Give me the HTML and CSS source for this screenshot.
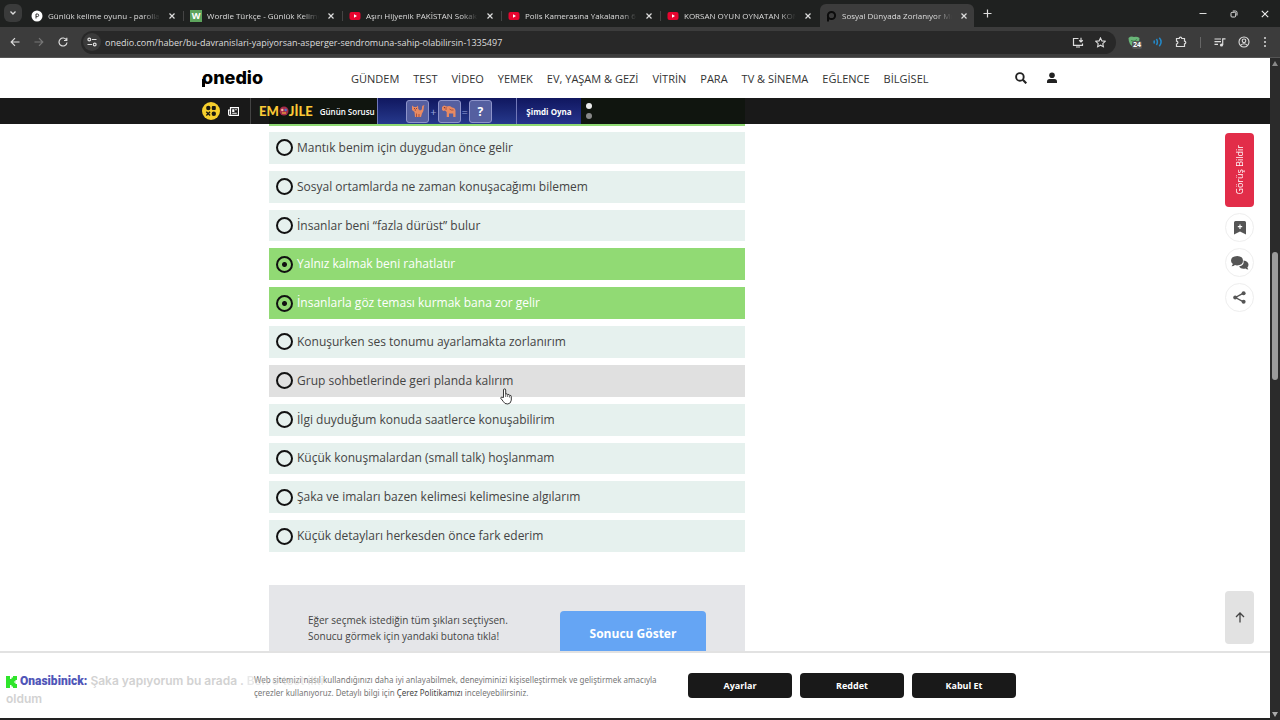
FILE: index.html
```html
<!DOCTYPE html>
<html lang="tr">
<head>
    <meta charset="UTF-8">
    <meta name="viewport" content="width=device-width, initial-scale=1.0">
    <title>Sosyal Dünyada Zorlanıyor Musun?</title>
    <link rel="stylesheet" href="styles.css">
</head>
<body>
    <!-- Sekmeler -->
    <div class="tab-strip">
        <button class="tab-search" aria-label="Sekmelerde ara"><svg width="8" height="8" viewBox="0 0 8 8"><path d="M1.5 2.5 4 5l2.5-2.5" fill="none" stroke="#ddd" stroke-width="1.3"/></svg></button>
        <div class="tab">
            <svg class="favicon" viewBox="0 0 12 12"><circle cx="6" cy="6" r="5.5" fill="#fff"/><path d="M5 8.5V4h1.4a1.3 1.3 0 0 1 0 2.6H5" fill="none" stroke="#333"/></svg>
            <span class="tab-title">Günlük kelime oyunu - parolla</span>
            <button class="tab-close" aria-label="Kapat"><svg width="6" height="6" viewBox="0 0 6 6"><path d="m.5.5 5 5m0-5-5 5" stroke="#ddd" stroke-width="1.2"/></svg></button>
        </div>
        <div class="tab">
            <span class="favicon wordle">W</span>
            <span class="tab-title">Wordle Türkçe - Günlük Kelime</span>
            <button class="tab-close" aria-label="Kapat"><svg width="6" height="6" viewBox="0 0 6 6"><path d="m.5.5 5 5m0-5-5 5" stroke="#ddd" stroke-width="1.2"/></svg></button>
        </div>
        <div class="tab">
            <svg class="favicon" viewBox="0 0 12 12"><rect x="0.5" y="2" width="11" height="8" rx="2" fill="#e8052f"/><path d="M5 4.2 8 6 5 7.8z" fill="#fff"/></svg>
            <span class="tab-title">Aşırı Hijyenik PAKİSTAN Sokak Y</span>
            <button class="tab-close" aria-label="Kapat"><svg width="6" height="6" viewBox="0 0 6 6"><path d="m.5.5 5 5m0-5-5 5" stroke="#ddd" stroke-width="1.2"/></svg></button>
        </div>
        <div class="tab">
            <svg class="favicon" viewBox="0 0 12 12"><rect x="0.5" y="2" width="11" height="8" rx="2" fill="#e8052f"/><path d="M5 4.2 8 6 5 7.8z" fill="#fff"/></svg>
            <span class="tab-title">Polis Kamerasına Yakalanan 6 D</span>
            <button class="tab-close" aria-label="Kapat"><svg width="6" height="6" viewBox="0 0 6 6"><path d="m.5.5 5 5m0-5-5 5" stroke="#ddd" stroke-width="1.2"/></svg></button>
        </div>
        <div class="tab last">
            <svg class="favicon" viewBox="0 0 12 12"><rect x="0.5" y="2" width="11" height="8" rx="2" fill="#e8052f"/><path d="M5 4.2 8 6 5 7.8z" fill="#fff"/></svg>
            <span class="tab-title">KORSAN OYUN OYNATAN KON</span>
            <button class="tab-close" aria-label="Kapat"><svg width="6" height="6" viewBox="0 0 6 6"><path d="m.5.5 5 5m0-5-5 5" stroke="#ddd" stroke-width="1.2"/></svg></button>
        </div>
        <div class="tab active">
            <svg class="favicon" viewBox="0 0 12 12"><circle cx="6.5" cy="5.5" r="3.6" fill="none" stroke="#0c0c0c" stroke-width="2"/><path d="M3 6v5.5" stroke="#0c0c0c" stroke-width="2"/></svg>
            <span class="tab-title">Sosyal Dünyada Zorlanıyor Mus</span>
            <button class="tab-close" aria-label="Kapat"><svg width="6" height="6" viewBox="0 0 6 6"><path d="m.5.5 5 5m0-5-5 5" stroke="#ddd" stroke-width="1.2"/></svg></button>
        </div>
        <button class="new-tab" aria-label="Yeni sekme"><svg width="9" height="9" viewBox="0 0 9 9"><path d="M4.5 .5v8M.5 4.5h8" stroke="#ddd" stroke-width="1.2"/></svg></button>
        <div class="window-buttons">
            <button aria-label="Küçült"><svg width="8" height="8" viewBox="0 0 8 8"><path d="M.5 3.5h7" stroke="#ddd"/></svg></button>
            <button aria-label="Önceki boyut"><svg width="8" height="8" viewBox="0 0 8 8"><rect x="1" y="2.3" width="4.7" height="4.7" rx="1" fill="none" stroke="#ddd"/><path d="M2.8 1h2.7A1.5 1.5 0 0 1 7 2.5v3" fill="none" stroke="#ddd"/></svg></button>
            <button aria-label="Kapat"><svg width="8" height="8" viewBox="0 0 8 8"><path d="m.8.8 6.4 6.4M7.2.8.8 7.2" stroke="#eee" stroke-width="1.1"/></svg></button>
        </div>
    </div>

    <!-- Adres çubuğu -->
    <div class="toolbar">
        <button aria-label="Geri"><svg width="10" height="10" viewBox="0 0 10 10"><path d="M9.5 5H1.2M5 1.2 1.2 5 5 8.8" fill="none" stroke="#ddd" stroke-width="1.2"/></svg></button>
        <button aria-label="İleri"><svg width="10" height="10" viewBox="0 0 10 10"><path d="M.5 5h8.3M5 1.2 8.8 5 5 8.8" fill="none" stroke="#777" stroke-width="1.2"/></svg></button>
        <button aria-label="Yenile"><svg width="10" height="10" viewBox="0 0 10 10"><path d="M8.5 3A4 4 0 1 0 9 5.5M8.8.7v2.8H6" fill="none" stroke="#ddd" stroke-width="1.2"/></svg></button>
        <div class="address">
            <span class="site-info"><svg width="10" height="10" viewBox="0 0 10 10" fill="none" stroke="#ddd" stroke-width="1.2"><circle cx="2.3" cy="2.5" r="1.4"/><path d="M5 2.5h4.5M.5 7.5H5"/><circle cx="7.7" cy="7.5" r="1.4"/></svg></span>
            <input type="text" aria-label="Adres" value="onedio.com/haber/bu-davranislari-yapiyorsan-asperger-sendromuna-sahip-olabilirsin-1335497">
            <button aria-label="Yükle"><svg width="12" height="11" viewBox="0 0 12 11"><path d="M6.5 1.5h-5v6.8h9V6.5M4 10h4M9 .8v4M7.2 3.3 9 5l1.8-1.7" fill="none" stroke="#ddd" stroke-width="1.2"/></svg></button>
            <button aria-label="Yer işareti"><svg width="11" height="11" viewBox="0 0 11 11"><path d="m5.5.9 1.4 3 3.3.4-2.4 2.3.6 3.2-2.9-1.6-2.9 1.6.6-3.2L.8 4.3l3.3-.4z" fill="none" stroke="#ddd" stroke-width="1.1"/></svg></button>
        </div>
        <div class="extensions">
            <button class="shield" aria-label="Engelleyici"><svg width="12" height="12" viewBox="0 0 12 12"><path d="M.5 2Q3-.3 6 1q3-1 5.500 1Q11.500 9 6 11 .5 9 .5 2" fill="#69b578"/><path d="M3 4.500q3 2 6-1" stroke="#3d7f4b" fill="none"/></svg><span class="count">24</span></button>
            <button aria-label="Ses"><svg width="10" height="10" viewBox="0 0 10 10" fill="none" stroke="#2489c9" stroke-width="1.5"><path d="M.8 3.500q1 1.500 0 3M3.400 2q2 3 0 6M6.300.8q3.600 4.200 0 8.400"/></svg></button>
            <button aria-label="Uzantılar"><svg width="12" height="12" viewBox="0 0 12 12"><path d="M1.500 2.500h2.700a1.300 1.300 0 0 1 2.600 0h2.700v2.700a1.300 1.300 0 0 1 0 2.600v2.700h-8V8a1.300 1.300 0 0 0 0-2.800z" fill="none" stroke="#ddd" stroke-width="1.200"/></svg></button>
            <span class="divider"></span>
            <button aria-label="Medya"><svg width="12" height="11" viewBox="0 0 12 11"><path d="M.5 2h6.500M.5 4.700h6.500M.5 7.400h3.500M8.700 8V1.800h2.800" fill="none" stroke="#ddd" stroke-width="1.200"/><circle cx="7.500" cy="8" r="1.600" fill="#ddd"/></svg></button>
            <button aria-label="Profil"><svg width="12" height="12" viewBox="0 0 12 12" fill="none" stroke="#ddd" stroke-width="1.100"><circle cx="6" cy="6" r="5"/><circle cx="6" cy="4.800" r="1.800"/><path d="M2.500 9.300q3.500-3 7 0"/></svg></button>
            <button aria-label="Menü"><svg width="4" height="12" viewBox="0 0 4 12" fill="#ddd"><circle cx="2" cy="2" r="1"/><circle cx="2" cy="6" r="1"/><circle cx="2" cy="10" r="1"/></svg></button>
        </div>
    </div>

    <div class="viewport">
        <div class="site">
            <header class="site-header">
                <div class="wrap header-row">
                    <a href="#" class="logo">onedio</a>
                    <nav class="menu">
                        <a href="#">GÜNDEM</a>
                        <a href="#">TEST</a>
                        <a href="#">VİDEO</a>
                        <a href="#">YEMEK</a>
                        <a href="#">EV, YAŞAM &amp; GEZİ</a>
                        <a href="#">VİTRİN</a>
                        <a href="#">PARA</a>
                        <a href="#">TV &amp; SİNEMA</a>
                        <a href="#">EĞLENCE</a>
                        <a href="#">BİLGİSEL</a>
                    </nav>
                    <div class="header-icons">
                        <button aria-label="Ara"><svg width="12" height="12" viewBox="0 0 12 12"><circle cx="4.900" cy="4.900" r="3.800" fill="none" stroke="#222" stroke-width="1.900"/><path d="m7.800 7.800 3.500 3.500" stroke="#222" stroke-width="2.200"/></svg></button>
                        <button aria-label="Üye girişi"><svg width="10" height="12" viewBox="0 0 10 12" fill="#222"><circle cx="5" cy="3.300" r="2.800"/><path d="M0 11V9.500Q0 7 2.500 7h5Q10 7 10 9.500V11z"/></svg></button>
                    </div>
                </div>
            </header>

            <!-- Oyun şeridi -->
            <div class="game-strip">
                <div class="wrap strip-row">
                    <div class="strip-icons">
                        <a href="#" aria-label="Oyunlar"><svg width="18" height="18" viewBox="0 0 18 18"><circle cx="9" cy="9" r="9" fill="#f6cf2d"/><g fill="#1b1a12"><circle cx="6.300" cy="6" r="2.200"/><rect x="9.800" y="4" width="4" height="4" rx="1"/><circle cx="11.800" cy="11.700" r="2.200"/></g><path d="m4.300 9.800 3.800 3.800m0-3.800-3.800 3.800" stroke="#1b1a12" stroke-width="1.400"/></svg></a>
                        <a href="#" aria-label="Haberler"><svg width="11" height="9" viewBox="0 0 11 9"><path d="M2.500.7h8v7.600H1.600A1 1 0 0 1 .6 7.300V3h1.900zM2.500 3v4.500" fill="none" stroke="#fff" stroke-width="1.200"/><path d="M4.200 2.300h2.200v2.600H4.200zM7.200 2.300h1.600v1H7.200zM4.200 5.800h4.600v1H4.200z" fill="#fff"/></svg></a>
                    </div>
                    <a href="#" class="emojile"><span class="emojile-logo">EM<svg width="10" height="10" viewBox="0 0 10 10"><circle cx="5" cy="5" r="4.500" fill="#a52d4b"/><circle cx="3.300" cy="4" r="1.200" fill="#f4b6a0"/><circle cx="6.700" cy="4" r="1.200" fill="#4778cf"/><path d="M3 7h4" stroke="#fbc936"/></svg>JİLE</span>Günün Sorusu</a>
                    <a href="#" class="riddle" aria-label="Günün sorusu">
                        <span class="tile"><svg width="16" height="16" viewBox="0 0 16 16"><path d="M2 2.500 4 4h2.500L8 2.500 8.300 6 10 7.500q2.500-.5 2-3.500 0-2 2.500-1.700-.8.700-.7 2.500 0 4-1.800 5.700L11 14H5L4.500 9 2 7z" fill="#e98a62"/><path d="M4 5.500h.8M6 5.500h.8M4.800 7h1" stroke="#702c2c"/><path d="M6.500 14v-3.500M9 14v-3" stroke="#ad523f"/></svg></span>
                        <span class="sign">+</span>
                        <span class="tile"><svg width="16" height="16" viewBox="0 0 16 16"><path d="M1 7V4l2-1.500 3 1L8 3q2 0 3 1.500 3 0 3.500 3V14h-2.300v-3.500H8V14H5.700V9L4 7.500 2.500 8z" fill="#e98a62"/><path d="M5 4v3M8.500 6q1.500 1.500 4 1" stroke="#ad523f" fill="none"/><circle cx="3.400" cy="4.700" r=".6" fill="#702c2c"/></svg></span>
                        <span class="sign">=</span>
                        <span class="tile">?</span>
                    </a>
                    <a href="#" class="play">Şimdi Oyna</a>
                    <div class="strip-rest"><span class="dot on"></span><span class="dot"></span></div>
                </div>
            </div>

            <div class="page-body">
                <main class="article">
                    <form>
                        <div class="cut-option"></div>
                        <div class="options">
                            <label class="option"><input type="checkbox">Mantık benim için duygudan önce gelir</label>
                            <label class="option"><input type="checkbox">Sosyal ortamlarda ne zaman konuşacağımı bilemem</label>
                            <label class="option"><input type="checkbox">İnsanlar beni “fazla dürüst” bulur</label>
                            <label class="option"><input type="checkbox" checked>Yalnız kalmak beni rahatlatır</label>
                            <label class="option"><input type="checkbox" checked>İnsanlarla göz teması kurmak bana zor gelir</label>
                            <label class="option"><input type="checkbox">Konuşurken ses tonumu ayarlamakta zorlanırım</label>
                            <label class="option hovered"><input type="checkbox">Grup sohbetlerinde geri planda kalırım
                                <svg class="pointer" width="12" height="17" viewBox="0 0 12 17"><path d="M3.500 9.500V2a1.100 1.100 0 0 1 2.200 0v4q1.500-.7 2 .5 1.500-.5 1.900.8 1.700-.2 1.700 1.300v3.500q-.3 3.500-3.500 3.900-3.300.2-4.500-2.500L.8 10.300q-.2-1.300 1-1.100z" fill="#fff" stroke="#222" stroke-width=".9"/><path d="M5.700 6v3M7.700 6.800V9M9.600 7.500v2" stroke="#222" stroke-width=".7"/></svg></label>
                            <label class="option"><input type="checkbox">İlgi duyduğum konuda saatlerce konuşabilirim</label>
                            <label class="option"><input type="checkbox">Küçük konuşmalardan (small talk) hoşlanmam</label>
                            <label class="option"><input type="checkbox">Şaka ve imaları bazen kelimesi kelimesine algılarım</label>
                            <label class="option"><input type="checkbox">Küçük detayları herkesden önce fark ederim</label>
                        </div>
                        <div class="result">
                            <p>Eğer seçmek istediğin tüm şıkları seçtiysen.<br>Sonucu görmek için yandaki butona tıkla!</p>
                            <button type="button">Sonucu Göster</button>
                        </div>
                    </form>
                </main>
                <aside class="rail">
                    <button class="feedback"><span>Görüş Bildir</span></button>
                    <button class="round" aria-label="Kaydet"><svg width="12" height="14" viewBox="0 0 12 14"><path d="M0 1.500Q0 0 1.500 0h9Q12 0 12 1.500V13.500L6 10.500 0 13.500z" fill="#555"/><path d="M6 3.500v4.400M3.800 5.700h4.400" stroke="#fff" stroke-width="1.200"/></svg></button>
                    <button class="round" aria-label="Yorumlar"><svg width="18" height="14" viewBox="0 0 18 14"><path d="M12.500 4.500q5 .7 5 4.300 0 1.700-1.200 2.700l1 2q-1.700 0-2.800-1-4.500 1-6.500-2 5.500-.8 4.500-6" fill="#555"/><path d="M6.300 0q5.700.3 5.700 4.700 0 4.500-6 4.700-1.200 0-2-.3-1.400 1.200-3.400 1.200L1.900 8Q0 6.800 0 4.700 0 .3 6.300 0" fill="#555"/></svg></button>
                    <button class="round" aria-label="Paylaş"><svg width="13" height="13" viewBox="0 0 13 13"><path d="M10.500 2.200 2.500 6.500l8 4.300" fill="none" stroke="#555" stroke-width="1.400"/><g fill="#555"><circle cx="10.600" cy="2.200" r="2"/><circle cx="2.200" cy="6.500" r="2"/><circle cx="10.600" cy="10.800" r="2"/></g></svg></button>
                    <button class="to-top" aria-label="Yukarı çık"><svg width="10" height="11" viewBox="0 0 10 11"><path d="M5 10.500V1M1 5l4-4 4 4" fill="none" stroke="#444" stroke-width="1.300"/></svg></button>
                </aside>
            </div>

            <!-- Çerez bildirimi -->
            <div class="cookie-bar">
                <p>Web sitemizi nasıl kullandığınızı daha iyi anlayabilmek, deneyiminizi kişiselleştirmek ve geliştirmek amacıyla çerezler kullanıyoruz. Detaylı bilgi için <a href="#">Çerez Politikamızı</a> inceleyebilirsiniz.</p>
                <div class="cookie-buttons">
                    <button>Ayarlar</button>
                    <button>Reddet</button>
                    <button>Kabul Et</button>
                </div>
                <div class="chat">
                    <svg width="11" height="12" viewBox="0 0 11 12"><path d="M0 0h4v3h1.500V1.500H7V0h4v4H9.500v1.500H8v1h1.500V8H11v4H7v-1.500H5.500V9H4v3H0z" fill="#2fe52b"/></svg>
                    <b>Onasibinick:</b> <span class="msg">Şaka yapıyorum bu arada . <span class="faded">Ben o test ilki</span><br>oldum</span>
                </div>
            </div>
        </div>
        <div class="scrollbar">
            <span class="arrow up"></span>
            <span class="thumb"></span>
            <span class="arrow down"></span>
        </div>
    </div>
</body>
</html>
```
FILE: styles.css
```css
* {
    box-sizing: border-box;
}

body {
    margin: 0;
    height: 100vh;
    display: flex;
    flex-direction: column;
    overflow: hidden;
    background: #222;
    font-family: "Open Sans", "Noto Sans", sans-serif;
    color: #333;
}

button {
    display: flex;
    align-items: center;
    justify-content: center;
    padding: 0;
    border: none;
    background: none;
    font-family: inherit;
    cursor: pointer;
}

a {
    color: inherit;
    text-decoration: none;
}

/* Tarayıcı sekmeleri */
.tab-strip {
    display: flex;
    align-items: flex-end;
    flex: none;
    height: 27px;
    padding-left: 4px;
    background: #1f2120;
    color: #ddd;
}

.tab-search {
    width: 18px;
    height: 18px;
    margin: 0 4px 5px 0;
    border-radius: 6px;
    background: #3a3b3b;
}

.tab {
    display: flex;
    align-items: center;
    flex: 0 1 159px;
    min-width: 0;
    height: 23px;
    padding: 0 6px 0 5px;
    gap: 5px;
    position: relative;
}

.tab:not(.last):not(.active)::after {
    content: "";
    position: absolute;
    right: 1px;
    width: 1px;
    height: 10px;
    background: #444;
}

.tab.active {
    flex-basis: 154px;
    margin-left: -1px;
    padding: 0 3px 0 5px;
    border-radius: 6px 6px 0 0;
    background: #3c3c3c;
}

.favicon {
    flex: none;
    width: 12px;
    height: 12px;
}

.wordle {
    background: #5da45d;
    color: #fff;
    font-size: 9px;
    font-weight: 700;
    line-height: 12px;
    text-align: center;
}

.tab-title {
    flex: 1;
    overflow: hidden;
    white-space: nowrap;
    font-size: 8px;
    mask-image: linear-gradient(to right, #000 85%, transparent);
}

.tab-close {
    width: 14px;
    height: 14px;
}

.new-tab {
    width: 27px;
    height: 27px;
}

.window-buttons {
    display: flex;
    margin-left: auto;
}

.window-buttons button {
    width: 31px;
    height: 27px;
}

/* Araç çubuğu */
.toolbar {
    display: flex;
    align-items: center;
    flex: none;
    height: 31px;
    padding: 0 6px 0 3px;
    background: #3c3c3c;
    border-bottom: 1px solid #555;
}

.toolbar > button {
    width: 24px;
    height: 24px;
}

.address {
    display: flex;
    align-items: center;
    flex: 1;
    height: 23px;
    margin-left: 6px;
    padding: 0 5px 0 2px;
    border-radius: 12px;
    background: #282828;
}

.site-info {
    display: flex;
    align-items: center;
    justify-content: center;
    width: 18px;
    height: 18px;
    border-radius: 50%;
    background: #3a3a3a;
}

.address input {
    flex: 1;
    padding: 0 4px;
    border: none;
    outline: none;
    background: none;
    color: #ddd;
    font-family: inherit;
    font-size: 9px;
}

.address button {
    width: 22px;
}

.extensions {
    display: flex;
    align-items: center;
    justify-content: space-between;
    width: 158px;
    padding: 0 7px 0 12px;
}

.divider {
    width: 1px;
    height: 11px;
    background: #666;
}

.shield {
    position: relative;
}

.count {
    position: absolute;
    left: 4px;
    top: 5px;
    padding: 0 1px;
    border-radius: 2px;
    background: #555;
    color: #fff;
    font-size: 7px;
    font-weight: 700;
    line-height: 8px;
}

/* Sayfa alanı */
.viewport {
    display: flex;
    flex: 1;
    min-height: 0;
}

.site {
    display: flex;
    flex-direction: column;
    flex: 1;
    min-width: 0;
    border-bottom: 2px solid #222;
    background: #fff;
}

.wrap {
    display: flex;
    width: 100%;
    max-width: 866px;
    margin: 0 auto;
}

.site-header {
    flex: none;
}

.header-row {
    align-items: center;
    height: 40px;
}

.logo {
    width: 149px;
    position: relative;
    color: #000;
    font-family: Inter, sans-serif;
    font-size: 18px;
    font-weight: 800;
    line-height: 22px;
}

/* Logodaki ilk harfin kuyruğu */
.logo::before {
    content: "";
    position: absolute;
    left: 0;
    top: 12px;
    width: 3px;
    height: 8px;
    background: #000;
}

.menu {
    display: flex;
    gap: 14px;
    font-size: 11px;
    white-space: nowrap;
}

.header-icons {
    display: flex;
    gap: 20px;
    margin-left: auto;
    padding-right: 11px;
}

.game-strip {
    flex: none;
    background: #191919;
    color: #fff;
    font-size: 8px;
    font-weight: 700;
    white-space: nowrap;
}

.strip-row {
    height: 26px;
}

.strip-icons {
    display: flex;
    align-items: center;
    gap: 8px;
    width: 49px;
    border-right: 1px solid #444;
}

.strip-icons a,
.header-icons button {
    display: flex;
}

.emojile {
    display: flex;
    align-items: center;
    gap: 7px;
    width: 126px;
    padding-left: 8px;
    background: linear-gradient(to right, #191919 18px, #10150f 18px);
    font-weight: 600;
}

.emojile-logo {
    display: flex;
    align-items: center;
    color: #fbc936;
    font-family: Lato, sans-serif;
    font-size: 13px;
    font-weight: 900;
}

.riddle {
    display: flex;
    align-items: center;
    justify-content: center;
    gap: 1px;
    width: 140px;
    padding-left: 4px;
    border-left: 1px solid #7178b8;
    border-right: 1px solid #7178b8;
    background: linear-gradient(#10175f, #26398c);
}

.tile {
    display: flex;
    align-items: center;
    justify-content: center;
    width: 23px;
    height: 23px;
    border: 1px solid #8e94ca;
    border-radius: 3px;
    background: #555fa0;
    font-size: 12px;
}

.sign {
    color: #9ca4dc;
    font-size: 11px;
    font-weight: 400;
}

.play {
    display: flex;
    align-items: center;
    justify-content: center;
    width: 64px;
    background: linear-gradient(#10175f, #26338c);
}

.strip-rest {
    display: flex;
    flex-direction: column;
    justify-content: center;
    gap: 4px;
    width: 164px;
    padding-left: 5px;
    background: #10150f;
}

.dot {
    width: 6px;
    height: 6px;
    border-radius: 50%;
    background: #888;
}

.dot.on {
    background: #eee;
}

/* Test */
.page-body {
    display: grid;
    grid-template-columns: 1fr minmax(0, 866px) 1fr;
    flex: 1;
    min-height: 0;
    overflow: hidden;
}

.article {
    grid-column: 2;
    padding-left: 67px;
    min-height: 0;
}

.article form {
    max-width: 476px;
}

.cut-option {
    height: 2px;
    margin-bottom: 6px;
    background: #8fd973;
}

.options {
    display: grid;
    grid-auto-rows: 1fr;
    gap: 7px;
    min-height: 420px;
}

.option {
    display: flex;
    align-items: center;
    gap: 4px;
    padding-left: 7px;
    position: relative;
    background: #e6f1ee;
    color: #444;
    font-size: 12px;
    line-height: 16px;
}

.option:has(input:checked) {
    background: #91da74;
    color: #fff;
}

.option.hovered {
    background: #e0e0e0;
}

.option input {
    appearance: none;
    width: 17px;
    height: 17px;
    margin: 0;
    border: 2px solid #111;
    border-radius: 50%;
}

.option input:checked {
    background: radial-gradient(circle, #111 2px, transparent 3px);
}

.pointer {
    position: absolute;
    left: 231px;
    top: 23px;
    z-index: 1;
}

.result {
    display: flex;
    align-items: flex-start;
    justify-content: space-between;
    margin-top: 33px;
    padding: 26px 39px;
    background: #e5e6e9;
}

.result p {
    margin: 1px 0 0;
    color: #444;
    font-size: 10px;
    line-height: 16px;
}

.result button {
    width: 146px;
    height: 44px;
    border-radius: 4px;
    background: #65a5f4;
    color: #fff;
    font-size: 12px;
    font-weight: 700;
}

/* Sağdaki düğmeler */
.rail {
    display: flex;
    flex-direction: column;
    align-items: center;
    justify-self: end;
    gap: 6px;
    width: 29px;
    margin: 9px 16px 7px 0;
}

.feedback {
    width: 29px;
    height: 74px;
    border-radius: 4px;
    background: #e22d49;
    color: #fff;
    font-size: 9px;
}

.feedback span {
    writing-mode: vertical-rl;
    transform: rotate(180deg);
}

.round {
    width: 29px;
    height: 29px;
    border: 1px solid #eee;
    border-radius: 50%;
    background: #fff;
}

.to-top {
    width: 29px;
    height: 53px;
    margin-top: auto;
    border-radius: 4px;
    background: #e2e2e2;
}

/* Çerez bildirimi */
.cookie-bar {
    display: flex;
    align-items: center;
    justify-content: center;
    gap: 20px;
    flex: none;
    height: 67px;
    position: relative;
    border-top: 2px solid #e2e2e2;
    background: #fff;
}

.cookie-bar p {
    width: 414px;
    margin: 0;
    color: #777;
    font-family: "Noto Sans", sans-serif;
    font-size: 8px;
    line-height: 13px;
}

.cookie-bar p a {
    color: #444;
}

.cookie-buttons {
    display: flex;
    gap: 8px;
}

.cookie-buttons button {
    width: 104px;
    height: 25px;
    border-radius: 4px;
    background: #191919;
    color: #fff;
    font-size: 9px;
    font-weight: 700;
}

/* Yayın sohbeti */
.chat {
    position: absolute;
    left: 6px;
    top: 19px;
    width: 330px;
    font-family: Roboto, sans-serif;
    font-size: 12px;
    font-weight: 700;
    line-height: 18px;
}

.chat svg {
    vertical-align: middle;
}

.chat b {
    color: #5056b8;
}

.msg {
    color: #d2d2d2;
    font-family: Inter, sans-serif;
    font-weight: 600;
}

.faded {
    opacity: 0.5;
}

/* Kaydırma çubuğu */
.scrollbar {
    display: flex;
    flex-direction: column;
    align-items: center;
    width: 10px;
    padding: 3px 0;
    background: #2b2b2b;
}

.thumb {
    width: 6px;
    height: 128px;
    margin: 186px 0 auto;
    border-radius: 3px;
    background: #9b9b9b;
}

.arrow {
    border: 3px solid transparent;
}

.up {
    border-top: none;
    border-bottom: 5px solid #888;
}

.down {
    border-bottom: none;
    border-top: 5px solid #aaa;
}
```
